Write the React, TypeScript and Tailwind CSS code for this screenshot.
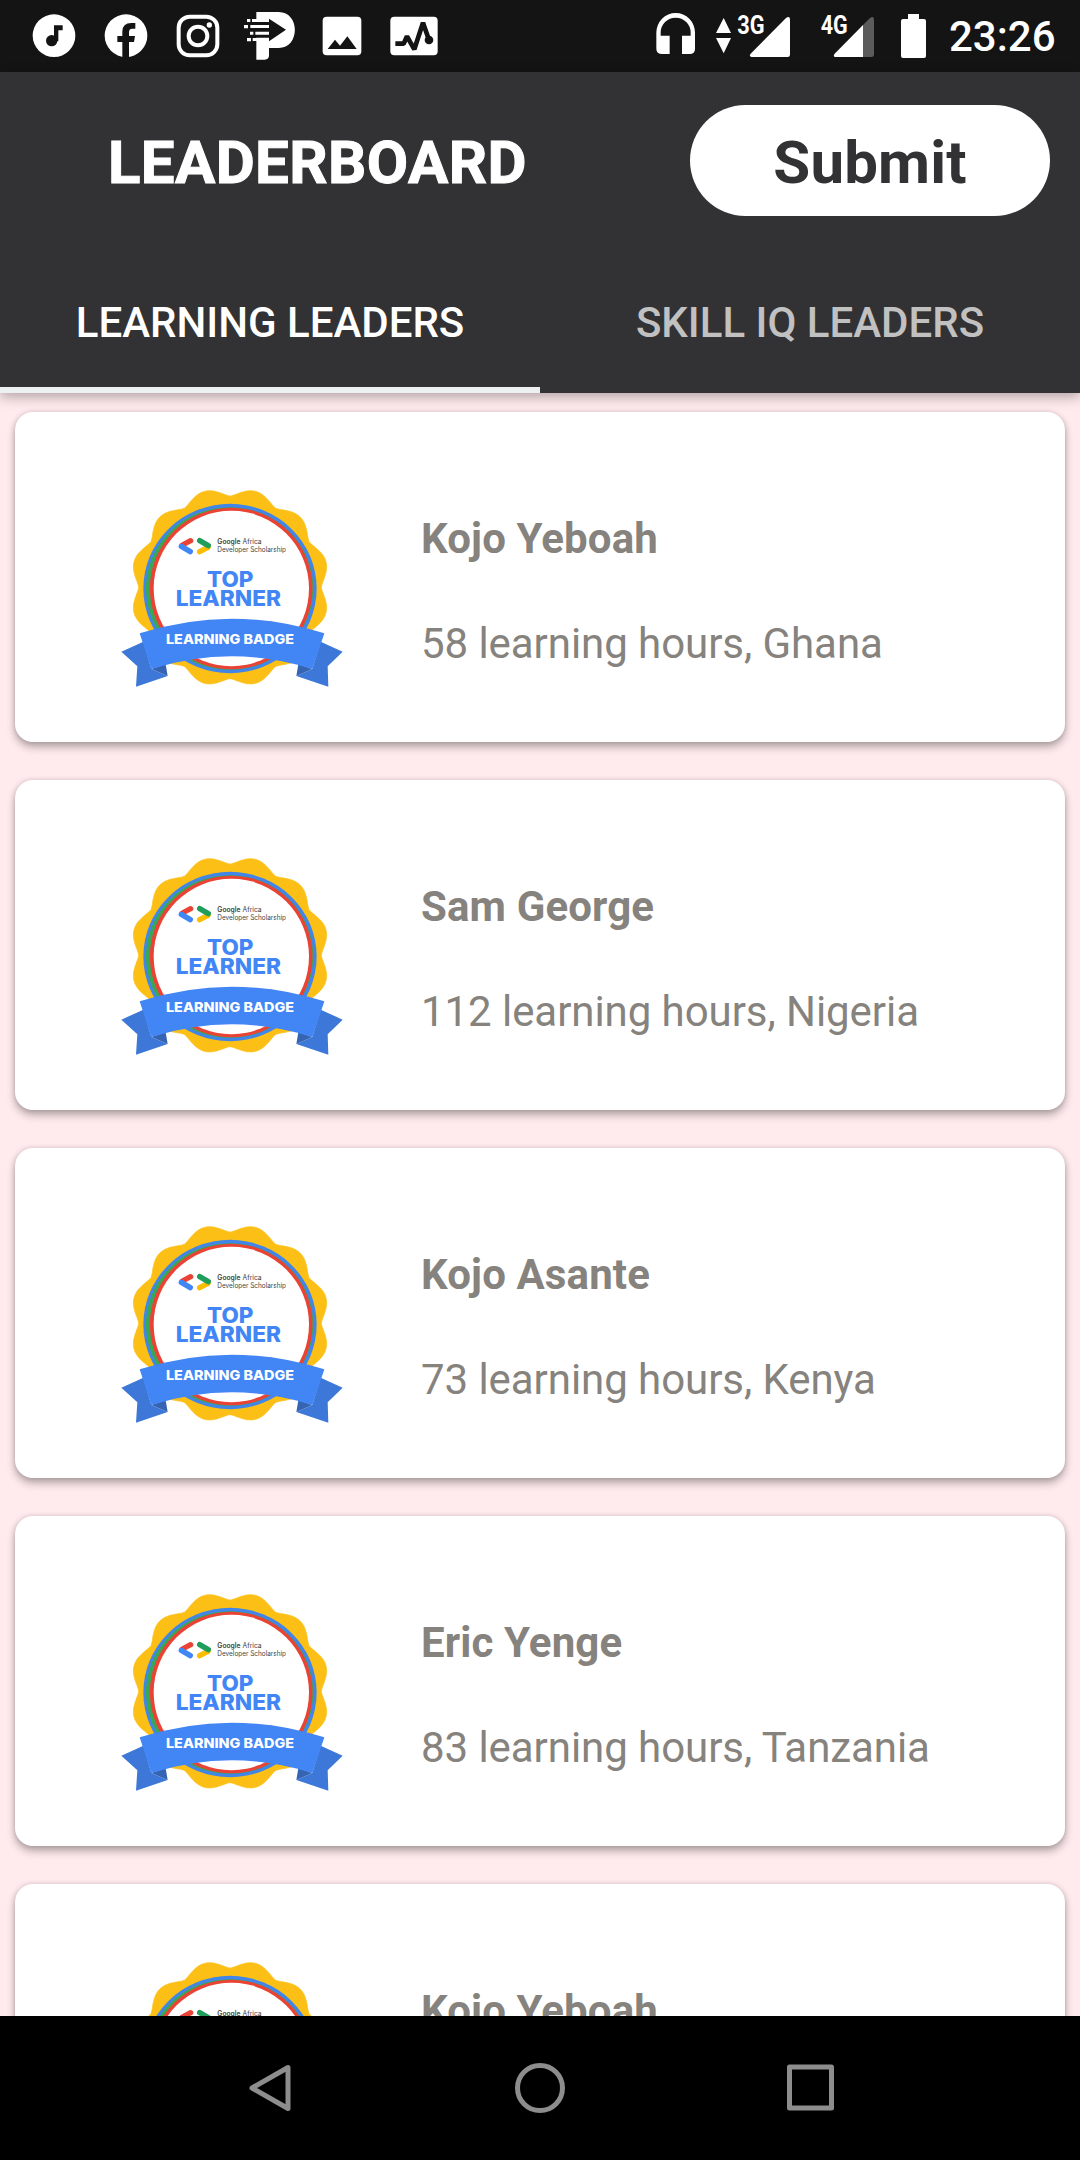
const leaders = [
  { name: 'Kojo Yeboah', detail: '58 learning hours, Ghana' },
  { name: 'Sam George', detail: '112 learning hours, Nigeria' },
  { name: 'Kojo Asante', detail: '73 learning hours, Kenya' },
  { name: 'Eric Yenge', detail: '83 learning hours, Tanzania' },
  { name: 'Kojo Yeboah', detail: '58 learning hours, Ghana' },
];

const scallop = Array.from({ length: 360 }, (_, i) => {
  const a = (i * Math.PI) / 180;
  const r = 274 + 24 * Math.pow((1 - Math.cos(12 * a)) / 2, 0.72);
  const x = 360 + r * Math.sin(a);
  const y = 337 - r * Math.cos(a);
  return `${x.toFixed(1)},${y.toFixed(1)}`;
}).join(' ');

function Badge() {
  return (
    <svg className="h-[225px] w-[250px] shrink-0" viewBox="0 0 750 675" fontFamily="Inter, sans-serif">
      <polygon points={scallop} fill="#fcbf16" stroke="#fcbf16" strokeWidth="2" strokeLinejoin="round" />
      <ellipse cx="360" cy="340.5" rx="260" ry="254" fill="#4285e8" />
      <ellipse cx="359" cy="340.5" rx="251" ry="244" fill="#3aa757" />
      <ellipse cx="363.5" cy="340.5" rx="244" ry="242.5" fill="#ea4335" />
      <ellipse cx="364" cy="340.5" rx="233" ry="233" fill="#fff" />
      <g strokeWidth="16" strokeLinecap="round">
        <path d="M217 210 242 197" stroke="#ea4335" />
        <path d="M269 230 294 217" stroke="#fbbc04" />
        <path d="M214 214 241 230" stroke="#4285f4" />
        <path d="M269 197 295 212" stroke="#1e9e5a" />
      </g>
      <g fill="#444" fontSize="21">
        <text x="322" y="207" textLength="133" lengthAdjust="spacingAndGlyphs"><tspan fontWeight="600">Google</tspan> Africa</text>
        <text x="322" y="232" textLength="206" lengthAdjust="spacingAndGlyphs">Developer Scholarship</text>
      </g>
      <g fill="#4285f4" fontSize="63" fontWeight="800">
        <text x="291" y="336" textLength="139" lengthAdjust="spacingAndGlyphs">TOP</text>
        <text x="197" y="394" textLength="316" lengthAdjust="spacingAndGlyphs">LEARNER</text>
      </g>
      <path d="M34 530 100 500 124 582 173 603 78 635 82 574Z" fill="#3d78d8" />
      <path d="M698 530 632 500 607 582 559 603 655 635 653 574Z" fill="#3d78d8" />
      <path d="M124 582 167 568 173 603ZM607 582 565 568 559 603Z" fill="#3564b4" />
      <path d="M89 475Q365 387 643 475L607 582Q365 506 124 582Z" fill="#4285f4" />
      <text x="168" y="508" textLength="384" lengthAdjust="spacingAndGlyphs" fontSize="40" fontWeight="800" fill="#fff">LEARNING BADGE</text>
    </svg>
  );
}

function NotificationIcons() {
  return (
    <svg className="h-[72px] w-[460px]" viewBox="0 0 1380 216" fill="#fff">
      <circle cx="162" cy="107" r="64" />
      <path d="M162 76h26v15h-13v33h-13z" fill="#141414" />
      <circle cx="155" cy="122" r="17" fill="#141414" />
      <circle cx="378" cy="107" r="64" />
      <path d="M367 172v-46h-15v-18h15v-13q0-26 27-26h12v17h-9q-10 0-10 10v12h18l-3 18h-15v46z" fill="#141414" />
      <rect x="536" y="50" width="116" height="116" rx="33" fill="none" stroke="#fff" strokeWidth="12" />
      <circle cx="594" cy="108" r="28" fill="none" stroke="#fff" strokeWidth="12" />
      <circle cx="628" cy="75" r="8" />
      <path d="M769 36h67c65 0 65 108 0 108h-29v22q0 13-13 13h-25z" />
      <path d="M766 66h41V56l51 33-51 35v-11h-41z" fill="#141414" />
      <path d="M741 57h10v9h-10zM756 57h24v9h-24zM732 75h12v10h-12zM751 75h56v9h-56zM750 95h10v9h-10zM766 95h41v9h-41zM741 114h12v10h-12zM758 114h22v9h-22z" />
      <rect x="968" y="50" width="116" height="116" rx="12" />
      <path d="M983 147 1005 119 1020 137 1042 109 1070 147Z" fill="#141414" />
      <rect x="1171" y="50" width="142" height="116" rx="12" />
      <path d="M1186 131h25l10-22 22 39 26-80 18 52" fill="none" stroke="#141414" strokeWidth="14" strokeLinejoin="bevel" />
      <circle cx="1287" cy="120" r="13" fill="#141414" />
    </svg>
  );
}

function SystemIcons() {
  return (
    <svg className="h-[72px] w-[300px]" viewBox="0 0 900 216" fill="#fff" fontFamily="Roboto, sans-serif">
      <path d="M49 98a58 59 0 0 1 116 0v48q0 16-16 16h-23v-55h26v-9a45 45 0 0 0-90 0v9h27v55H67q-18 0-18-16z" />
      <path d="M228 99 251 54 273 99ZM228 114h45l-22 46z" />
      <text x="292" y="101" fontSize="75" fontWeight="700" textLength="82" lengthAdjust="spacingAndGlyphs">3G</text>
      <path d="M332 161 438 54q12-8 12 6v104q0 7-7 7H334q-8-2-2-10z" />
      <text x="542" y="101" fontSize="75" fontWeight="700" textLength="81" lengthAdjust="spacingAndGlyphs">4G</text>
      <path d="M669 75 690 54q12-8 12 6v104q0 7-7 7h-26z" fill="#5b5b5b" />
      <path d="M584 161 669 75v96h-83q-8-2-2-10z" />
      <path d="M804 42h33v15h15q6 0 6 6v105q0 6-6 6h-63q-6 0-6-6V63q0-6 6-6h15z" />
    </svg>
  );
}

export default function App() {
  return (
    <div className="flex h-[2160px] w-[1080px] flex-col overflow-hidden bg-[#ffebee] font-['Roboto',sans-serif]">
      <div className="flex h-[72px] shrink-0 items-center bg-[#141414] text-white">
        <NotificationIcons />
        <div className="ml-auto flex items-center">
          <SystemIcons />
          <span className="w-[140px] pt-[2px] pl-[9px] text-[42px] leading-[72px] font-medium">23:26</span>
        </div>
      </div>

      <header className="relative z-10 flex h-[321px] shrink-0 flex-col bg-[#323234] shadow-[0_4px_12px_rgba(0,0,0,0.3)]">
        <div className="flex h-[177px] items-start justify-between pt-[33px] pr-[30px] pl-[108px]">
          <h1 className="text-[60px] leading-[116px] font-bold tracking-[0.4px] text-white [-webkit-text-stroke:1px_white]">LEADERBOARD</h1>
          <button className="h-[111px] w-[360px] rounded-full bg-white text-[60px] leading-[116px] font-bold tracking-[0.15px] text-[#323234]">Submit</button>
        </div>
        <div className="grid h-36 grid-cols-2 text-center text-[42px] leading-[148px] font-medium">
          <div className="h-36 border-b-[6px] border-[#ecf0f1] text-white">LEARNING LEADERS</div>
          <div className="h-36 text-[#c1c1c2]">SKILL IQ LEADERS</div>
        </div>
      </header>

      <main className="flex min-h-0 flex-1 flex-col gap-[38px] overflow-hidden px-[15px] pt-[19px]">
        {leaders.map((leader, i) => (
          <article key={i} className="flex h-[330px] shrink-0 items-start rounded-[18px] bg-white pt-[63px] pl-[95px] shadow-[0_5px_9px_rgba(0,0,0,0.3),0_0_5px_rgba(0,0,0,0.14)]">
            <Badge />
            <div className="pt-[39px] pl-[61px] text-[42px] text-[#86827d]">
              <h2 className="leading-[50px] font-bold tracking-[0.12px]">{leader.name}</h2>
              <p className="mt-[55px] leading-[50px] tracking-[-0.06px]">{leader.detail}</p>
            </div>
          </article>
        ))}
      </main>

      <nav className="z-10 flex h-36 shrink-0 items-center justify-center gap-[221px] bg-black">
        <svg className="h-[52px] w-[48px]" viewBox="0 0 48 52" fill="none" stroke="#8d8d8d" strokeWidth="5" strokeLinejoin="round"><path d="M43 5.5v41L7 26z" /></svg>
        <svg className="h-[52px] w-[52px]" viewBox="0 0 52 52" fill="none" stroke="#8d8d8d" strokeWidth="5"><circle cx="26" cy="26" r="22.5" /></svg>
        <svg className="h-[52px] w-[48px]" viewBox="0 0 48 52" fill="none" stroke="#8d8d8d" strokeWidth="5" strokeLinejoin="round"><path d="M2.5 5h42v41h-42z" /></svg>
      </nav>
    </div>
  );
}
